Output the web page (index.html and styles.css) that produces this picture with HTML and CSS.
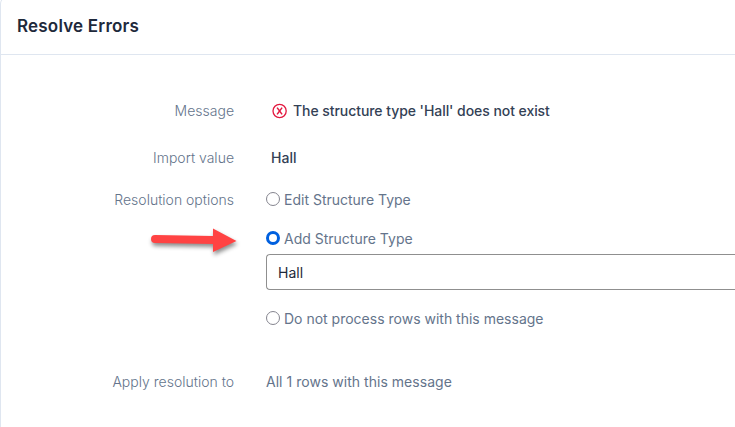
FILE: index.html
```html
<!DOCTYPE html>
<html lang="en">
<head>
    <meta charset="UTF-8">
    <meta name="viewport" content="width=device-width, initial-scale=1.0">
    <title>Resolve Errors</title>
    <link rel="stylesheet" href="styles.css">
</head>
<body>
    <div class="card">
        <div class="card-header">
            <h1>Resolve Errors</h1>
        </div>
        <form class="card-body">
            <div class="form-row message-row">
                <div class="label">Message</div>
                <div class="value error-message">
                    <svg class="error-icon" width="16" height="16" viewBox="0 0 16 16" fill="none" stroke="#e3173e">
                        <circle cx="7.6" cy="8" r="6.6" stroke-width="1.3"/>
                        <path d="M5.1 4.6l5 6.8M10.1 4.6l-5 6.8" stroke-width="1.5"/>
                    </svg>
                    <span>The structure type 'Hall' does not exist</span>
                </div>
            </div>
            <div class="form-row import-row">
                <div class="label">Import value</div>
                <div class="value import-value">Hall</div>
            </div>
            <div class="form-row options-row">
                <div class="label">Resolution options</div>
                <div class="value">
                    <label class="option"><input type="radio" name="resolution"><span>Edit Structure Type</span></label>
                    <label class="option option-add"><input type="radio" name="resolution" checked><span>Add Structure Type</span></label>
                    <input type="text" class="text-input" value="Hall">
                    <label class="option option-skip"><input type="radio" name="resolution"><span>Do not process rows with this message</span></label>
                </div>
                <svg class="arrow" width="100" height="40" viewBox="0 0 100 40">
                    <path d="M10 15L68 16V8.5L91.5 21L68 32V24L10 23A4 4 0 0 1 10 15Z" fill="#ff4343"/>
                </svg>
            </div>
            <div class="form-row apply-row">
                <div class="label">Apply resolution to</div>
                <div class="value apply-value">All 1 rows with this message</div>
            </div>
        </form>
    </div>
</body>
</html>
```

FILE: styles.css
```css
* {
    box-sizing: border-box;
}

body {
    margin: 0;
    background-color: #fff;
    color: #64748b;
    font-family: Inter, sans-serif;
    font-size: 14px;
    line-height: 22px;
    overflow: hidden;
}

/* The card is open at the right and bottom, only its top left corner shows */
.card {
    height: 431px;
    margin-top: -4px;
    background-color: #fff;
    border: 1px solid #dfe6f0;
    border-width: 1px 0 0 1px;
    border-radius: 8px 0 0 0;
}

/* Header */
.card-header {
    height: 58px;
    padding: 18px 16px 0;
    border-bottom: 1px solid #dfe6f0;
}

h1 {
    margin: 0;
    color: #1e293b;
    font-size: 17px;
    font-weight: 600;
    line-height: 22px;
    letter-spacing: 0.2px;
}

/* Form rows */
.card-body {
    padding-top: 45px;
}

.form-row {
    display: grid;
    grid-template-columns: 233px 1fr;
    column-gap: 32px;
    position: relative;
}

.label {
    text-align: right;
    font-weight: 300;
}

.message-row {
    margin-bottom: 25px;
}

.import-row {
    margin-bottom: 20px;
}

.error-message {
    display: flex;
    align-items: center;
    gap: 5px;
    padding-left: 6px;
    color: #334155;
    font-weight: 500;
    letter-spacing: -0.06px;
}

.import-value {
    padding-left: 5px;
    color: #334155;
    font-weight: 500;
}

/* Resolution options */
.option {
    display: flex;
    align-items: center;
    gap: 4px;
}

.option input {
    appearance: none;
    width: 14px;
    height: 14px;
    margin: 0 0 2px;
    border: 1px solid #85858f;
    border-radius: 50%;
    background-color: #fff;
}

.option input:checked {
    border: 3px solid #0060df;
}

.option-add {
    margin-top: 17px;
}

.option-skip {
    margin-top: 18px;
}

.text-input {
    display: block;
    width: 100%;
    height: 36px;
    margin-top: 4px;
    padding: 0 11px;
    border: 1px solid #8f8f8f;
    border-right: 0;
    border-radius: 4px 0 0 4px;
    color: #1e293b;
    font-family: inherit;
    font-size: 14px;
}

/* Pointer to the selected option */
.arrow {
    position: absolute;
    left: 144px;
    top: 31px;
    filter: drop-shadow(1px 3px 2px rgba(0, 0, 0, 0.45));
}

.apply-row {
    margin-top: 41px;
}

.apply-value {
    letter-spacing: 0.03px;
}
```
